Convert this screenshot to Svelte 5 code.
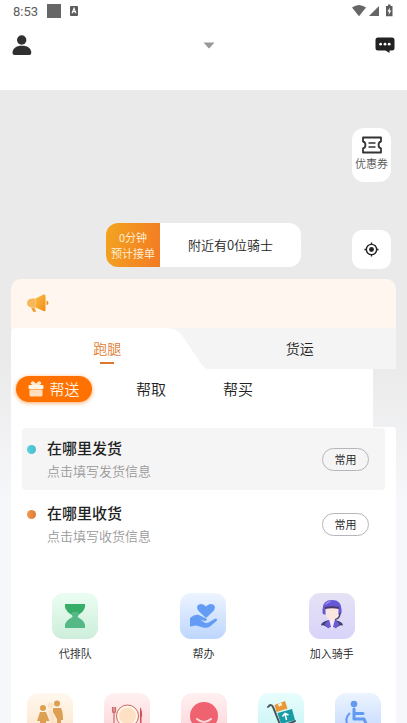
<script>
    let tab = $state('run')
    let type = $state('send')

    const tabs = [
        { id: 'run', name: '跑腿' },
        { id: 'freight', name: '货运' }
    ]

    const types = [
        { id: 'send', name: '帮送' },
        { id: 'fetch', name: '帮取' },
        { id: 'buy', name: '帮买' }
    ]

    const addresses = [
        { id: 'from', title: '在哪里发货', hint: '点击填写发货信息' },
        { id: 'to', title: '在哪里收货', hint: '点击填写收货信息' }
    ]
</script>

<div class="page">
    <div class="status">
        <span class="time">8:53</span>
        <span class="square"></span>
        <svg class="app" width="10" height="10" viewBox="0 0 10 10">
            <rect x="1" width="8" height="10" rx="1" fill="#5c5c5c" />
            <path d="M3 7.2 5 2.2 7 7.2M3.7 5.6H6.3" fill="none" stroke="#fff" stroke-width="1.1" />
        </svg>
        <svg class="system" width="42" height="14" viewBox="0 0 42 14">
            <path d="M0 3.6Q7-1.8 14 3.6L7 12.2Z" fill="#666" />
            <path d="M27 2V12H17Z" fill="#666" />
            <path d="M34 2H36V0.500H38.500V2H40.500V12.200H34Z" fill="#5c5c5c" />
            <path d="M38 3.500 35.300 7.600H37L36.600 11 39.300 6.600H37.600Z" fill="#fff" />
        </svg>
    </div>

    <header>
        <button class="icon-button" aria-label="我的">
            <svg width="20" height="21" viewBox="0 0 20 21">
                <circle cx="9.700" cy="5" r="4.700" fill="#303030" />
                <path d="M.5 18C.5 13.500 4 10.800 10 10.800S19.300 13.500 19.300 18Q19.300 20 17.300 20H2.500Q.5 20 .5 18Z" fill="#303030" />
            </svg>
        </button>
        <button class="icon-button city" aria-label="城市">
            <svg width="12" height="7" viewBox="0 0 12 7">
                <path d="M.5.500H11.500L6.600 6Q6 6.600 5.400 6Z" fill="#999" />
            </svg>
        </button>
        <button class="icon-button" aria-label="消息">
            <svg width="20" height="17" viewBox="0 0 20 17">
                <path d="M3 .500H17Q19.500.500 19.500 3V11Q19.500 13.500 17 13.500H14.500V16L10.500 13.500H3Q.5 13.500.5 11V3Q.5.500 3 .500Z" fill="#222" />
                <circle cx="5.600" cy="7.200" r="1.400" fill="#fff" />
                <circle cx="10" cy="7.200" r="1.400" fill="#fff" />
                <circle cx="14.200" cy="7.200" r="1.400" fill="#fff" />
            </svg>
        </button>
    </header>

    <main>
        <section class="map">
            <button class="coupon">
                <svg width="22" height="18" viewBox="0 0 22 18">
                    <path d="M2 1.500H20V5.500Q17.600 6 17.600 9T20 12.500V16.500H2V12.500Q4.400 12 4.400 9T2 5.500Z" fill="none" stroke="#333" stroke-width="1.800" stroke-linejoin="round" />
                    <path d="M7.500 7H14.500M7.500 11H14.500" stroke="#333" stroke-width="1.500" />
                </svg>
                优惠券
            </button>
            <div class="map-row">
                <div class="riders">
                    <p class="eta">0分钟<br />预计接单</p>
                    <p class="count">附近有0位骑士</p>
                </div>
                <button class="locate" aria-label="定位">
                    <svg width="15" height="15" viewBox="0 0 16 16">
                        <circle cx="8" cy="8" r="5.500" fill="none" stroke="#222" stroke-width="1.500" />
                        <circle cx="8" cy="8" r="2.600" fill="#222" />
                        <path d="M8 .500V3M8 13V15.500M.5 8H3M13 8H15.500" stroke="#222" stroke-width="1.500" />
                    </svg>
                </button>
            </div>
        </section>

        <section class="card">
            <div class="notice">
                <svg width="24" height="22" viewBox="0 0 24 22">
                    <defs>
                        <linearGradient id="horn" x1="0" y1="0" x2="1" y2="1">
                            <stop offset="0" stop-color="#fbbd4a" />
                            <stop offset="1" stop-color="#f08d12" />
                        </linearGradient>
                    </defs>
                    <path d="M5 14.500H8.500L10 18.500Q8.500 20 7 18.500Z" fill="#f1a132" />
                    <path d="M9.500 5.500V14.500H6Q1 14 1 10T6 5.500Z" fill="#f7b85a" />
                    <path d="M9.500 5.500 17.500 1.500Q19.500 1 19.500 3V17Q19.500 19 17.500 18L9.500 14.500Z" fill="url(#horn)" />
                    <path d="M20.500 7.500Q22.500 8 22.500 10T20.500 12Z" fill="#ef8b1a" />
                </svg>
            </div>

            <div class="tabs">
                <svg class="tab-shape" viewBox="0 0 196 41" preserveAspectRatio="none">
                    <path d="M0 6Q0 0 6 0H156Q165 0 171 8L190 36Q193 40 196 41H0Z" fill="#fff" />
                </svg>
                {#each tabs as item}
                    <button class="tab" class:active={tab === item.id} onclick={() => (tab = item.id)}>{item.name}</button>
                {/each}
            </div>

            <div class="types">
                {#each types as item}
                    <button class="type" class:active={type === item.id} onclick={() => (type = item.id)}>
                        {#if type === item.id}
                            <svg width="16" height="16" viewBox="0 0 16 16">
                                <path d="M8 4Q3.500 4.200 3.300 2.200 3.400.500 5.300.900 7 1.300 8 4 9 1.300 10.700.900 12.600.500 12.700 2.200 12.500 4.200 8 4Z" fill="#ffe9d2" stroke="#fff0dd" stroke-width="1" />
                                <rect x=".500" y="4" width="15" height="4" rx="1" fill="#fff4e6" />
                                <path d="M1.500 8.500H14.500V14Q14.500 15.500 13 15.500H3Q1.500 15.500 1.500 14Z" fill="#ffdfbd" />
                            </svg>
                        {/if}
                        {item.name}
                    </button>
                {/each}
            </div>

            <div class="body">
                {#each addresses as item}
                    <div class="address {item.id}">
                        <span class="dot"></span>
                        <button class="fill">
                            <strong>{item.title}</strong>
                            <span>{item.hint}</span>
                        </button>
                        <button class="common">常用</button>
                    </div>
                {/each}

                <div class="services three">
                    <a href="#queue">
                        <span class="tile green">
                            <svg width="46" height="46" viewBox="0 0 46 46">
                                <path d="M13 11H33V14Q32 19 25 22.500H21Q14 19 13 14Z" fill="#36ad68" />
                                <path d="M19.500 19H26.500V22.500L25.500 24Q32 27 33 32V35H13V32Q14 27 20.500 24Z" fill="#54b987" />
                            </svg>
                        </span>
                        代排队
                    </a>
                    <a href="#help">
                        <span class="tile blue">
                            <svg width="46" height="46" viewBox="0 0 46 46">
                                <path d="M26 25 18.500 18Q15.500 13.500 18.800 11.500 23 9.700 26 13.500 29 9.700 33.200 11.500 36.500 13.500 33.500 18Z" fill="#649cf5" />
                                <path d="M10 25Q15 20.500 19 22L26 25.500Q28 27 25.500 28L20.500 27 25.500 30Q28 30.500 31 28L35.500 25.500Q38 25.500 36.500 28L30 33.500Q27 35.500 23 34.500L16 32.500 10 33.500Z" fill="#649cf5" />
                            </svg>
                        </span>
                        帮办
                    </a>
                    <a href="#join">
                        <span class="tile purple">
                            <svg width="46" height="46" viewBox="0 0 46 46">
                                <path d="M12 32.500Q12 28.500 20 27H26Q34 28.500 34 32.500Q31 31.500 28.500 34H17.500Q15 31.500 12 32.500Z" fill="#41416b" />
                                <path d="M15.500 31 19.500 27H26.500L30.500 31 27 35.500 23 33 19 35.500Z" fill="#6a5cd8" />
                                <path d="M20 26H26L24.500 32 23 37 21.500 32Z" fill="#f7e8f0" />
                                <path d="M13.500 16.500Q13.500 7 23 7T32.500 16.500V19.500Q32.500 21.500 30.500 21.500H15.500Q13.500 21.500 13.500 19.500Z" fill="#6557d5" />
                                <path d="M16.500 15H29.500V20Q29 26.500 23 26.500T16.500 20Z" fill="#fae5df" />
                                <path d="M16 14Q23 12.500 30 14V16Q23 14.500 16 16Z" fill="#493b69" />
                                <path d="M31 20Q31 25.500 26 26.500" fill="none" stroke="#3d3552" stroke-width="1.200" />
                                <path d="M16.500 11.500Q18.500 9 21.500 8.500" fill="none" stroke="#a79df5" stroke-width="1.200" />
                            </svg>
                        </span>
                        加入骑手
                    </a>
                </div>

                <div class="services five">
                    <a href="#care" aria-label="陪护">
                        <span class="tile sand">
                            <svg width="46" height="46" viewBox="0 0 46 46">
                                <circle cx="16" cy="15" r="3" fill="#dda052" />
                                <path d="M13 19H19L22.500 28H19V38H13V28H10Z" fill="#dda052" />
                                <circle cx="23.500" cy="12.500" r="3" fill="#fbe3ca" />
                                <path d="M21 17H25L29 29V38H23V25Z" fill="#fbe3ca" />
                                <circle cx="30" cy="10.500" r="3" fill="#dda052" />
                                <path d="M26 15H34Q36 18 36 27H34V38H30V26L26 19Z" fill="#dda052" />
                            </svg>
                        </span>
                    </a>
                    <a href="#meal" aria-label="餐饮">
                        <span class="tile pink">
                            <svg width="46" height="46" viewBox="0 0 46 46">
                                <circle cx="23.500" cy="23" r="11" fill="#fff8ed" stroke="#cf655b" stroke-width="1" />
                                <circle cx="23.500" cy="23" r="8.500" fill="#ffe0c2" />
                                <path d="M8.500 14V18Q8.500 20 10 20T11.500 18V14M10 14V36" fill="none" stroke="#cb6d6a" stroke-width="1.200" />
                                <path d="M36 14Q38.500 17 38 24H37.500V36H36Z" fill="#d34f55" />
                            </svg>
                        </span>
                    </a>
                    <a href="#smile" aria-label="陪伴">
                        <span class="tile pink">
                            <svg width="46" height="46" viewBox="0 0 46 46">
                                <circle cx="23" cy="23" r="14" fill="#ef6270" />
                                <path d="M16 26Q23 32 30 26" fill="none" stroke="#ffdadd" stroke-width="2" stroke-linecap="round" />
                            </svg>
                        </span>
                    </a>
                    <a href="#move" aria-label="搬运">
                        <span class="tile cyan">
                            <svg width="46" height="46" viewBox="0 0 46 46">
                                <path d="M10 14Q13 10 15 14L23 34 37 28" fill="none" stroke="#48565d" stroke-width="2" stroke-linecap="round" />
                                <path d="M16.500 12 27 8 29.500 15.500 18.500 19Z" fill="#e99836" />
                                <path d="M20 11 21 14 22.500 12.500 24 13 23.500 9.500Z" fill="#fff2df" />
                                <path d="M19.500 20 34 16 37 27 23 31Z" fill="#1b9ba5" />
                                <path d="M28.500 27 27 20.500M24.500 23.500 27 20.500 30.500 22" fill="none" stroke="#fff" stroke-width="1.500" />
                            </svg>
                        </span>
                    </a>
                    <a href="#wheelchair" aria-label="无障碍">
                        <span class="tile blue">
                            <svg width="46" height="46" viewBox="0 0 46 46">
                                <circle cx="19" cy="11" r="3.300" fill="#6299f1" />
                                <path d="M19 16V26H29L33 35M19 20.500H28" fill="none" stroke="#6299f1" stroke-width="3" stroke-linecap="round" stroke-linejoin="round" />
                                <path d="M15 20Q9 25 13 33 19 39 26 33" fill="none" stroke="#6299f1" stroke-width="2" />
                            </svg>
                        </span>
                    </a>
                </div>
            </div>
        </section>
    </main>
</div>

<style>
    :global(body) {
        margin: 0;
    }

    .page {
        height: 100vh;
        overflow-y: auto;
        scrollbar-width: none;
        background: #fff;
        color: #222;
        font-family: "Noto Sans CJK SC", sans-serif;
        font-size: 11px;
        font-weight: 350;
    }

    button {
        margin: 0;
        padding: 0;
        border: none;
        background: none;
        color: inherit;
        font-family: inherit;
        font-size: inherit;
        font-weight: inherit;
        cursor: pointer;
    }

    svg {
        display: block;
    }

    p {
        margin: 0;
    }

    .status {
        display: flex;
        align-items: center;
        height: 22px;
        padding: 0 13px;
    }

    .time {
        color: #5c5c5c;
        font-family: Roboto, sans-serif;
        font-size: 13px;
        font-weight: 400;
    }

    .square {
        width: 14px;
        height: 14px;
        margin: 0 8px 0 9px;
        background: #666;
    }

    .system {
        margin-left: auto;
    }

    header {
        display: flex;
        align-items: start;
        justify-content: space-between;
        height: 55px;
        padding: 13px 12px 0;
    }

    .icon-button {
        display: flex;
        align-items: center;
        height: 20px;
    }

    .city {
        padding-left: 10px;
    }

    main {
        background: linear-gradient(#eaeaea 270px, #f6f7fa 410px);
    }

    .map {
        display: flex;
        flex-direction: column;
        gap: 41px;
        padding: 38px 16px 10px;
    }

    .coupon {
        display: flex;
        flex-direction: column;
        align-items: center;
        align-self: flex-end;
        width: 39px;
        height: 54px;
        padding-top: 8px;
        border-radius: 12px;
        background: #fff;
        color: #555;
        line-height: 18px;
    }

    .map-row {
        display: grid;
        grid-template-columns: 1fr auto 1fr;
        height: 46px;
    }

    .riders {
        grid-column: 2;
        display: flex;
        height: 44px;
        border-radius: 12px;
        overflow: hidden;
        background: #fff;
    }

    .eta {
        width: 54px;
        padding: 6px 0;
        background: linear-gradient(100deg, #f3a41f, #f37a24);
        color: #fff3df;
        line-height: 16px;
        text-align: center;
    }

    .count {
        width: 141px;
        font-size: 13px;
        line-height: 44px;
        text-align: center;
    }

    .locate {
        display: grid;
        place-items: center;
        justify-self: end;
        align-self: end;
        width: 39px;
        height: 39px;
        border-radius: 10px;
        background: #fff;
    }

    .card {
        margin: 0 11px;
    }

    .notice {
        display: flex;
        align-items: center;
        height: 49px;
        padding: 0 15px;
        border-radius: 10px 10px 0 0;
        background: #fff7ef;
    }

    .tabs {
        position: relative;
        display: grid;
        grid-template-columns: 1fr 1fr;
        height: 41px;
        background: linear-gradient(90deg, #fff7ef 50px, #f4f4f4 50px);
    }

    .tab-shape {
        position: absolute;
        top: 0;
        left: 0;
        width: 51%;
        height: 100%;
    }

    .tab {
        position: relative;
        display: flex;
        flex-direction: column;
        align-items: center;
        padding-top: 10px;
        font-size: 14px;
        line-height: 20px;
    }

    .tab.active {
        color: #df8035;
    }

    .tab.active::after {
        content: "";
        width: 14px;
        height: 2px;
        margin-top: 4px;
        background: #dd7630;
    }

    .types {
        display: flex;
        align-items: start;
        gap: 31px;
        height: 51px;
        margin-right: 23px;
        padding: 7px 0 0 5px;
        background: #fff;
    }

    .type {
        display: flex;
        align-items: center;
        justify-content: center;
        gap: 5px;
        width: 56px;
        height: 26px;
        border-radius: 13px;
        font-size: 15px;
        line-height: 26px;
    }

    .type.active {
        width: 76px;
        background: #ff7100;
        box-shadow: 0 1px 4px #ffa65f;
        color: #fff3e3;
    }

    .body {
        padding-top: 1px;
        border-radius: 0 3px 0 0;
        background: #fff;
    }

    .address {
        display: flex;
        align-items: center;
        height: 62px;
        margin: 0 11px 3px;
        padding: 0 16px 0 5px;
        border-radius: 4px;
    }

    .address.from {
        background: #f5f5f5;
    }

    .dot {
        width: 9px;
        height: 9px;
        margin-bottom: 20px;
        border-radius: 50%;
        background: linear-gradient(90deg, #55d5de, #4fb8cd);
    }

    .to .dot {
        background: linear-gradient(90deg, #f09a4b, #dd7a35);
    }

    .fill {
        display: flex;
        flex: 1;
        flex-direction: column;
        gap: 2px;
        margin-left: 11px;
        text-align: left;
    }

    .fill strong {
        font-size: 15px;
        font-weight: 500;
        line-height: 22px;
    }

    .fill span {
        color: #999;
        font-size: 13px;
        line-height: 20px;
    }

    .common {
        width: 47px;
        height: 23px;
        border: 1px solid #b5b5bb;
        border-radius: 12px;
        line-height: 20px;
    }

    .services {
        display: grid;
        padding-top: 35px;
    }

    .three {
        grid-template-columns: repeat(3, 1fr);
    }

    .five {
        grid-template-columns: repeat(5, 1fr);
        padding: 32px 0 20px;
    }

    .services a {
        display: flex;
        flex-direction: column;
        align-items: center;
        gap: 6px;
        color: #222;
        line-height: 16px;
        text-decoration: none;
    }

    .tile {
        width: 46px;
        height: 46px;
        border-radius: 11px;
    }

    .green {
        background: linear-gradient(#ebfdf2, #cdeeda);
    }

    .blue {
        background: linear-gradient(#edf4ff, #bdd6fe);
    }

    .purple {
        background: linear-gradient(#e5e2f5, #d8d3fa);
    }

    .sand {
        background: linear-gradient(#fff8ef, #fde3c8);
    }

    .pink {
        background: linear-gradient(#fff0f1, #fdd2d6);
    }

    .cyan {
        background: linear-gradient(#e9fdfd, #c2f3f4);
    }
</style>
